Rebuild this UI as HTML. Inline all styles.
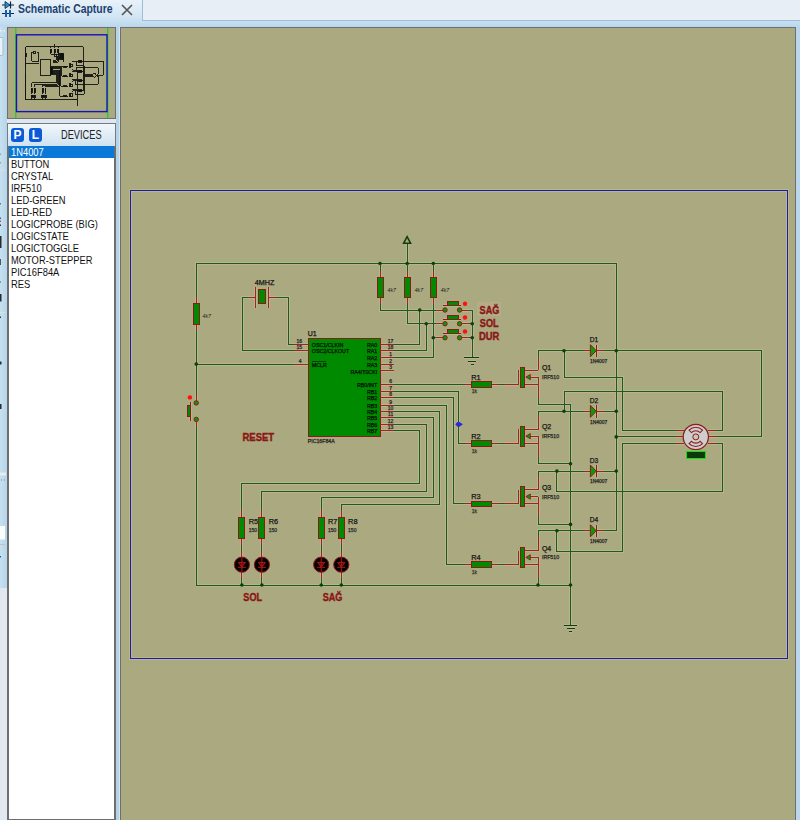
<!DOCTYPE html>
<html><head><meta charset="utf-8">
<style>
*{margin:0;padding:0;box-sizing:border-box}
html,body{width:800px;height:820px;overflow:hidden;background:#dbe7f3;font-family:"Liberation Sans",sans-serif}
#tabbar{position:absolute;left:0;top:0;width:800px;height:27px;background:linear-gradient(#e9f2f9,#d3e6f4 60%,#b9d7ed)}
#tabtitle{position:absolute;left:18px;top:2px;font-size:12px;font-weight:bold;color:#1d3f6e;transform:scaleX(0.87);transform-origin:0 0;white-space:nowrap}
#tabrest{position:absolute;left:142px;top:-1px;width:660px;height:22px;background:#e8eef5;border:1px solid #9dbdd8}
#leftstrip{position:absolute;left:0;top:27px;width:7px;height:793px;background:linear-gradient(90deg,#c6e0f1,#b6d5ea)}
#ovw{position:absolute;left:7px;top:27px;width:110px;height:92px;background:#aaa97f;border:1px solid #6f6f6f;overflow:hidden}
#devhdr{position:absolute;left:7px;top:123px;width:109px;height:23px;background:linear-gradient(#f2f7fb,#cfe2f1);border:1px solid #7a7a7a;border-bottom:none}
.pl{position:absolute;top:4px;width:13px;height:14px;background:#0b5bd9;border-radius:3px;color:#fff;font-size:12px;font-weight:bold;text-align:center;line-height:14px}
#devlbl{position:absolute;left:53px;top:4px;font-size:12px;color:#222;transform:scaleX(0.77);transform-origin:0 0}
#devlist{position:absolute;left:7px;top:146px;width:109px;height:674px;background:#fff;border:2px solid #6e6e6e;border-top:none;border-bottom:1px solid #6e6e6e}
#devlist div{height:12px;line-height:12px;font-size:11px;color:#111;padding-left:2px;white-space:nowrap}
#devlist div span{display:inline-block;transform:scaleX(0.85);transform-origin:0 0}
#devlist div.sel{background:#0a78d7;color:#fff}
#splitter{position:absolute;left:116px;top:27px;width:5px;height:793px;background:linear-gradient(90deg,#b4d4ea 0,#b4d4ea 60%,#dbe4ea 60%,#dbe4ea 80%,#707070 80%)}
#canvas{position:absolute;left:120px;top:27px;width:676px;height:800px;background:#aaa97f;border:1px solid #6f6f6f}
#rightstrip{position:absolute;left:796px;top:27px;width:4px;height:793px;background:#b9d6ec}
svg{position:absolute;left:0;top:0}
svg text{font-family:"Liberation Sans",sans-serif}
.sch line,.sch rect,.sch path.w{shape-rendering:crispEdges}
</style></head><body>
<div id="tabbar"></div>
<div id="tabrest"></div>
<svg width="16" height="22" style="left:0;top:0">
<line x1="2" y1="5" x2="14" y2="5" stroke="#222" stroke-width="1"/>
<polygon points="5,1.5 5,8.5 10,5" fill="#1e90e0" stroke="#123" stroke-width="0.8"/>
<line x1="10.5" y1="1.5" x2="10.5" y2="8.5" stroke="#123" stroke-width="1.2"/>
<line x1="2" y1="13.5" x2="14" y2="13.5" stroke="#222" stroke-width="1"/>
<rect x="5" y="10" width="2" height="7" fill="#1560b0"/>
<rect x="9" y="10" width="2" height="7" fill="#1560b0"/>
</svg>
<div id="tabtitle">Schematic Capture</div>
<svg width="12" height="12" style="left:121px;top:4px"><path d="M1,1 L11,11 M11,1 L1,11" stroke="#555" stroke-width="1.6"/></svg>
<div id="leftstrip"></div>
<div style="position:absolute;left:0;top:588px;width:7px;height:232px;background:#e1e8ef"></div>
<svg width="8" height="600" style="left:0;top:0">
<rect x="0" y="30" width="1.5" height="1.5" fill="#eef4f8"/><rect x="3.5" y="30" width="1.5" height="1.5" fill="#eef4f8"/>
<rect x="-1" y="37.5" width="4" height="18" rx="1" fill="#e8f1f8" stroke="#9fbfd6" stroke-width="1"/>
<rect x="0" y="153.5" width="1" height="1.5" fill="#a89e7a"/>
<rect x="0" y="162" width="1" height="1.5" fill="#a89e7a"/>
<rect x="0" y="169.5" width="5" height="1" fill="#e6e0d4"/>
<rect x="0" y="203" width="1" height="1.5" fill="#2a8a8a"/>
<rect x="0" y="217.5" width="1" height="1.5" fill="#2255cc"/>
<rect x="0" y="220.5" width="1" height="1.5" fill="#d05020"/>
<rect x="0" y="224.5" width="1" height="1.5" fill="#333"/>
<rect x="0" y="236" width="1.5" height="12" fill="#2a2a2a"/>
<rect x="0" y="259" width="1" height="6" fill="#555"/>
<rect x="0" y="281.5" width="1" height="1" fill="#555"/>
<rect x="0" y="294" width="1.5" height="7.5" fill="#2a2a2a"/>
<rect x="0" y="312" width="5" height="1" fill="#e6e0d4"/>
<rect x="0" y="316.5" width="1" height="1.5" fill="#333"/>
<rect x="0" y="361.5" width="1.5" height="3" fill="#2a2a2a"/>
<rect x="0" y="404" width="1.5" height="5" fill="#2a2a2a"/>
<rect x="0" y="472.5" width="6" height="3" fill="#e6eef4"/>
<rect x="1" y="479.5" width="1" height="1" fill="#888"/><rect x="4" y="479.5" width="1" height="1" fill="#888"/>
<rect x="-1" y="526" width="6" height="13.5" fill="#fdfdfd"/>
<rect x="0" y="544" width="5" height="1" fill="#c9c0b0"/>
<rect x="0" y="556" width="1" height="1.5" fill="#2255cc"/>
</svg>
<div id="devhdr"><div class="pl" style="left:3px">P</div><div class="pl" style="left:21px">L</div><div id="devlbl">DEVICES</div></div>
<div id="devlist">
<div class="sel"><span>1N4007</span></div><div><span>BUTTON</span></div><div><span>CRYSTAL</span></div><div><span>IRF510</span></div><div><span>LED-GREEN</span></div><div><span>LED-RED</span></div><div><span>LOGICPROBE (BIG)</span></div><div><span>LOGICSTATE</span></div><div><span>LOGICTOGGLE</span></div><div><span>MOTOR-STEPPER</span></div><div><span>PIC16F84A</span></div><div><span>RES</span></div>
</div>
<div id="splitter"></div>
<div id="canvas"></div>
<div id="rightstrip"></div>

<svg width="800" height="820" style="left:0;top:0">
<rect x="7.5" y="27.5" width="108" height="91" fill="#aaa97f" stroke="#6f6f6f" stroke-width="1"/>
<line x1="15.8" y1="28" x2="15.8" y2="118" stroke="#1ed01e" stroke-width="1.3"/>
<line x1="107.7" y1="28" x2="107.7" y2="118" stroke="#1ed01e" stroke-width="1.3"/>
<rect x="16.5" y="34.8" width="90.5" height="76.8" fill="none" stroke="#1414b8" stroke-width="1.4"/>
<g shape-rendering="crispEdges">
<path d="M25.56,52.34 L25.56,46.86 L83.44,46.86 L83.44,90.73 L81.75,90.73" fill="none" stroke="#111" stroke-width="0.9"/>
<path d="M25.56,57.87 L25.56,68.37" fill="none" stroke="#111" stroke-width="0.9"/>
<path d="M25.56,73.74 L25.56,99.62" fill="none" stroke="#111" stroke-width="0.9"/>
<path d="M25.56,99.62 L77.13,99.62" fill="none" stroke="#111" stroke-width="0.9"/>
<path d="M25.56,63.37 L39.04,63.37" fill="none" stroke="#111" stroke-width="0.9"/>
<path d="M39.04,61.19 L31.90,61.19 L31.90,52.44 L32.69,52.44" fill="none" stroke="#111" stroke-width="0.9"/>
<path d="M36.54,52.44 L38.22,52.44 L38.22,60.09 L39.04,60.09" fill="none" stroke="#111" stroke-width="0.9"/>
<path d="M50.88,52.44 L50.88,54.49 L58.54,54.49" fill="none" stroke="#111" stroke-width="0.9"/>
<path d="M54.63,52.44 L54.63,56.75 L58.54,56.75" fill="none" stroke="#111" stroke-width="0.9"/>
<path d="M58.23,52.44 L58.23,62.25 L52.81,62.25" fill="none" stroke="#111" stroke-width="0.9"/>
<path d="M58.23,59.05 L58.54,59.05" fill="none" stroke="#111" stroke-width="0.9"/>
<path d="M56.36,54.49 L56.36,60.09 L52.81,60.09" fill="none" stroke="#111" stroke-width="0.9"/>
<path d="M57.25,56.75 L57.25,61.15 L52.81,61.15" fill="none" stroke="#111" stroke-width="0.9"/>
<path d="M54.63,46.86 L54.63,43.58" fill="none" stroke="#111" stroke-width="0.9"/>
<path d="M63.11,54.49 L63.59,54.49 L63.59,62.22" fill="none" stroke="#111" stroke-width="0.9"/>
<path d="M63.11,56.75 L63.59,56.75" fill="none" stroke="#111" stroke-width="0.9"/>
<path d="M63.11,59.05 L63.59,59.05" fill="none" stroke="#111" stroke-width="0.9"/>
<path d="M52.81,66.70 L62.59,66.70" fill="none" stroke="#111" stroke-width="0.9"/>
<path d="M52.81,67.78 L61.70,67.78 L61.70,76.40 L62.59,76.40" fill="none" stroke="#111" stroke-width="0.9"/>
<path d="M52.81,68.85 L60.94,68.85 L60.94,86.31 L62.59,86.31" fill="none" stroke="#111" stroke-width="0.9"/>
<path d="M52.81,70.08 L59.99,70.08 L59.99,96.29 L62.59,96.29" fill="none" stroke="#111" stroke-width="0.9"/>
<path d="M52.81,71.15 L59.08,71.15 L59.08,86.36 L45.55,86.36 L45.55,87.35" fill="none" stroke="#111" stroke-width="0.9"/>
<path d="M52.81,72.17 L58.23,72.17 L58.23,85.28 L42.78,85.28 L42.78,87.35" fill="none" stroke="#111" stroke-width="0.9"/>
<path d="M52.81,73.27 L57.28,73.27 L57.28,84.24 L34.61,84.24 L34.61,87.35" fill="none" stroke="#111" stroke-width="0.9"/>
<path d="M52.81,74.28 L56.36,74.28 L56.36,82.98 L31.85,82.98 L31.85,87.35" fill="none" stroke="#111" stroke-width="0.9"/>
<path d="M31.85,93.01 L31.85,94.04" fill="none" stroke="#111" stroke-width="0.9"/>
<path d="M31.85,98.47 L31.85,99.62" fill="none" stroke="#111" stroke-width="0.9"/>
<path d="M34.61,93.01 L34.61,94.04" fill="none" stroke="#111" stroke-width="0.9"/>
<path d="M34.61,98.47 L34.61,99.62" fill="none" stroke="#111" stroke-width="0.9"/>
<path d="M42.78,93.01 L42.78,94.04" fill="none" stroke="#111" stroke-width="0.9"/>
<path d="M42.78,98.47 L42.78,99.62" fill="none" stroke="#111" stroke-width="0.9"/>
<path d="M45.55,93.01 L45.55,94.04" fill="none" stroke="#111" stroke-width="0.9"/>
<path d="M45.55,98.47 L45.55,99.62" fill="none" stroke="#111" stroke-width="0.9"/>
<path d="M67.21,66.70 L68.02,66.70" fill="none" stroke="#111" stroke-width="0.9"/>
<path d="M72.65,62.20 L72.65,61.17 L78.96,61.17" fill="none" stroke="#111" stroke-width="0.9"/>
<path d="M72.65,68.92 L72.65,70.04 L77.13,70.04" fill="none" stroke="#111" stroke-width="0.9"/>
<path d="M81.75,61.17 L83.44,61.17" fill="none" stroke="#111" stroke-width="0.9"/>
<path d="M67.21,76.40 L68.02,76.40" fill="none" stroke="#111" stroke-width="0.9"/>
<path d="M72.65,72.15 L72.65,71.12 L78.96,71.12" fill="none" stroke="#111" stroke-width="0.9"/>
<path d="M72.65,78.61 L72.65,79.72 L77.13,79.72" fill="none" stroke="#111" stroke-width="0.9"/>
<path d="M81.75,71.12 L83.44,71.12" fill="none" stroke="#111" stroke-width="0.9"/>
<path d="M67.21,86.31 L68.02,86.31" fill="none" stroke="#111" stroke-width="0.9"/>
<path d="M72.65,81.96 L72.65,80.93 L78.96,80.93" fill="none" stroke="#111" stroke-width="0.9"/>
<path d="M72.65,88.53 L72.65,89.68 L77.13,89.68" fill="none" stroke="#111" stroke-width="0.9"/>
<path d="M81.75,80.93 L83.44,80.93" fill="none" stroke="#111" stroke-width="0.9"/>
<path d="M67.21,96.29 L68.02,96.29" fill="none" stroke="#111" stroke-width="0.9"/>
<path d="M72.65,91.76 L72.65,90.73 L78.96,90.73" fill="none" stroke="#111" stroke-width="0.9"/>
<path d="M72.65,98.50 L72.65,99.62 L77.13,99.62" fill="none" stroke="#111" stroke-width="0.9"/>
<path d="M81.75,90.73 L83.44,90.73" fill="none" stroke="#111" stroke-width="0.9"/>
<path d="M77.13,70.04 L77.13,106.27" fill="none" stroke="#111" stroke-width="0.9"/>
<path d="M76.24,61.17 L76.24,65.53 L84.30,65.53 L84.30,74.27 L91.64,74.27" fill="none" stroke="#111" stroke-width="0.9"/>
<path d="M76.24,71.12 L76.24,67.83 L98.01,67.83 L98.01,74.27 L97.14,74.27" fill="none" stroke="#111" stroke-width="0.9"/>
<path d="M75.26,80.93 L75.26,84.24 L98.01,84.24 L98.01,76.37 L97.14,76.37" fill="none" stroke="#111" stroke-width="0.9"/>
<path d="M75.26,90.73 L75.26,94.04 L84.33,94.04 L84.33,76.37 L91.64,76.37" fill="none" stroke="#111" stroke-width="0.9"/>
<path d="M83.44,61.17 L103.45,61.17 L103.45,75.32 L97.14,75.32" fill="none" stroke="#111" stroke-width="0.9"/>
<path d="M83.44,75.32 L91.64,75.32" fill="none" stroke="#111" stroke-width="0.9"/>
<path d="M50.88,46.86 L50.88,48.01" fill="none" stroke="#111" stroke-width="0.9"/>
<path d="M54.63,46.86 L54.63,48.01" fill="none" stroke="#111" stroke-width="0.9"/>
<path d="M58.23,46.86 L58.23,48.01" fill="none" stroke="#111" stroke-width="0.9"/>
<path d="M25.56,46.86 L25.56,99.62" fill="none" stroke="#111" stroke-width="0.9"/>
<rect x="40.96" y="59.09" width="9.96" height="16.23" fill="none" stroke="#111" stroke-width="0.9"/>
<rect x="50.47" y="49.08" width="0.83" height="3.36" fill="#111" stroke="#111" stroke-width="0.9"/>
<rect x="54.22" y="49.08" width="0.83" height="3.36" fill="#111" stroke="#111" stroke-width="0.9"/>
<rect x="57.81" y="49.08" width="0.83" height="3.36" fill="#111" stroke="#111" stroke-width="0.9"/>
<rect x="25.11" y="53.34" width="0.90" height="3.45" fill="#111" stroke="#111" stroke-width="0.9"/>
<rect x="33.74" y="51.05" width="1.76" height="2.79" fill="none" stroke="#111" stroke-width="0.9"/>
<rect x="63.54" y="66.21" width="2.67" height="0.98" fill="#111" stroke="#111" stroke-width="0.9"/>
<rect x="69.90" y="63.91" width="0.96" height="3.28" fill="#111" stroke="#111" stroke-width="0.9"/>
<rect x="70.86" y="64.40" width="1.79" height="2.30" fill="none" stroke="#111" stroke-width="0.9"/>
<rect x="63.54" y="75.91" width="2.67" height="0.98" fill="#111" stroke="#111" stroke-width="0.9"/>
<rect x="69.90" y="73.61" width="0.96" height="3.28" fill="#111" stroke="#111" stroke-width="0.9"/>
<rect x="70.86" y="74.10" width="1.79" height="2.30" fill="none" stroke="#111" stroke-width="0.9"/>
<rect x="63.54" y="85.82" width="2.67" height="0.98" fill="#111" stroke="#111" stroke-width="0.9"/>
<rect x="69.90" y="83.52" width="0.96" height="3.28" fill="#111" stroke="#111" stroke-width="0.9"/>
<rect x="70.86" y="84.01" width="1.79" height="2.30" fill="none" stroke="#111" stroke-width="0.9"/>
<rect x="63.54" y="95.80" width="2.67" height="0.98" fill="#111" stroke="#111" stroke-width="0.9"/>
<rect x="69.90" y="93.50" width="0.96" height="3.28" fill="#111" stroke="#111" stroke-width="0.9"/>
<rect x="70.86" y="93.99" width="1.79" height="2.30" fill="none" stroke="#111" stroke-width="0.9"/>
<rect x="78.99" y="60.19" width="2.76" height="1.97" fill="#111" stroke="#111" stroke-width="0.9"/>
<rect x="78.99" y="70.13" width="2.76" height="1.97" fill="#111" stroke="#111" stroke-width="0.9"/>
<rect x="78.99" y="79.94" width="2.76" height="1.97" fill="#111" stroke="#111" stroke-width="0.9"/>
<rect x="78.99" y="89.74" width="2.76" height="1.97" fill="#111" stroke="#111" stroke-width="0.9"/>
<rect x="31.44" y="88.46" width="0.83" height="3.77" fill="#111" stroke="#111" stroke-width="0.9"/>
<rect x="31.02" y="95.02" width="1.65" height="2.46" fill="#111" stroke="#111" stroke-width="0.9"/>
<rect x="34.19" y="88.46" width="0.83" height="3.77" fill="#111" stroke="#111" stroke-width="0.9"/>
<rect x="33.78" y="95.02" width="1.65" height="2.46" fill="#111" stroke="#111" stroke-width="0.9"/>
<rect x="42.37" y="88.46" width="0.83" height="3.77" fill="#111" stroke="#111" stroke-width="0.9"/>
<rect x="41.95" y="95.02" width="1.65" height="2.46" fill="#111" stroke="#111" stroke-width="0.9"/>
<rect x="45.13" y="88.46" width="0.83" height="3.77" fill="#111" stroke="#111" stroke-width="0.9"/>
<rect x="44.72" y="95.02" width="1.65" height="2.46" fill="#111" stroke="#111" stroke-width="0.9"/>
<rect x="59.56" y="53.18" width="3.45" height="1.64" fill="#111" stroke="#111" stroke-width="0.9"/>
<rect x="59.56" y="55.44" width="3.45" height="1.64" fill="#111" stroke="#111" stroke-width="0.9"/>
<rect x="59.56" y="57.73" width="3.45" height="1.64" fill="#111" stroke="#111" stroke-width="0.9"/>
<circle cx="94.40" cy="75.32" r="1.8" fill="none" stroke="#111" stroke-width="0.9"/>
<rect x="50.88" y="66.64" width="1.93" height="7.71" fill="#111" stroke="#111" stroke-width="0.9"/>
</g>
<rect x="130.5" y="190" width="657" height="468" fill="none" stroke="#bab68a" stroke-width="3" shape-rendering="crispEdges"/>
<rect x="130.5" y="190" width="657" height="468" fill="none" stroke="#1a1ab8" stroke-width="1" shape-rendering="crispEdges"/>
<g class="sch">
<path class="w" d="M196.25,296.9 L196.25,263.5 L616.25,263.5 L616.25,530.8 L604,530.8" fill="none" stroke="#b8b48c" stroke-width="3"/>
<path class="w" d="M196.25,330.6 L196.25,394.6" fill="none" stroke="#b8b48c" stroke-width="3"/>
<path class="w" d="M196.25,427.3 L196.25,585" fill="none" stroke="#b8b48c" stroke-width="3"/>
<path class="w" d="M196.25,585 L570.5,585" fill="none" stroke="#b8b48c" stroke-width="3"/>
<path class="w" d="M196.25,364.1 L294.1,364.1" fill="none" stroke="#b8b48c" stroke-width="3"/>
<path class="w" d="M294.1,350.8 L242.25,350.8 L242.25,297.5 L248,297.5" fill="none" stroke="#b8b48c" stroke-width="3"/>
<path class="w" d="M275.9,297.5 L288.1,297.5 L288.1,344.1 L294.1,344.1" fill="none" stroke="#b8b48c" stroke-width="3"/>
<path class="w" d="M380,297.5 L380,310 L435.6,310" fill="none" stroke="#b8b48c" stroke-width="3"/>
<path class="w" d="M407.2,297.5 L407.2,323.75 L435.6,323.75" fill="none" stroke="#b8b48c" stroke-width="3"/>
<path class="w" d="M433.3,297.5 L433.3,357.25 L394,357.25" fill="none" stroke="#b8b48c" stroke-width="3"/>
<path class="w" d="M433.3,337.75 L435.6,337.75" fill="none" stroke="#b8b48c" stroke-width="3"/>
<path class="w" d="M419.75,310 L419.75,344.1 L394,344.1" fill="none" stroke="#b8b48c" stroke-width="3"/>
<path class="w" d="M426.25,323.75 L426.25,350.6 L394,350.6" fill="none" stroke="#b8b48c" stroke-width="3"/>
<path class="w" d="M407.2,263.5 L407.2,243.5" fill="none" stroke="#b8b48c" stroke-width="3"/>
<path class="w" d="M468.75,310 L472.25,310 L472.25,357.1" fill="none" stroke="#b8b48c" stroke-width="3"/>
<path class="w" d="M468.75,323.75 L472.25,323.75" fill="none" stroke="#b8b48c" stroke-width="3"/>
<path class="w" d="M468.75,337.75 L472.25,337.75" fill="none" stroke="#b8b48c" stroke-width="3"/>
<path class="w" d="M394,384.4 L465,384.4" fill="none" stroke="#b8b48c" stroke-width="3"/>
<path class="w" d="M394,391.0 L458.5,391.0 L458.5,443.5 L465,443.5" fill="none" stroke="#b8b48c" stroke-width="3"/>
<path class="w" d="M394,397.5 L453.0,397.5 L453.0,503.9 L465,503.9" fill="none" stroke="#b8b48c" stroke-width="3"/>
<path class="w" d="M394,405.0 L446.1,405.0 L446.1,564.7 L465,564.7" fill="none" stroke="#b8b48c" stroke-width="3"/>
<path class="w" d="M394,411.5 L439.5,411.5 L439.5,504.2 L341.3,504.2 L341.3,510.25" fill="none" stroke="#b8b48c" stroke-width="3"/>
<path class="w" d="M394,417.75 L433.3,417.75 L433.3,497.6 L321.2,497.6 L321.2,510.25" fill="none" stroke="#b8b48c" stroke-width="3"/>
<path class="w" d="M394,424.4 L426.4,424.4 L426.4,491.3 L261.9,491.3 L261.9,510.25" fill="none" stroke="#b8b48c" stroke-width="3"/>
<path class="w" d="M394,430.6 L419.75,430.6 L419.75,483.6 L241.9,483.6 L241.9,510.25" fill="none" stroke="#b8b48c" stroke-width="3"/>
<path class="w" d="M241.9,544.75 L241.9,551" fill="none" stroke="#b8b48c" stroke-width="3"/>
<path class="w" d="M241.9,578 L241.9,585" fill="none" stroke="#b8b48c" stroke-width="3"/>
<path class="w" d="M261.9,544.75 L261.9,551" fill="none" stroke="#b8b48c" stroke-width="3"/>
<path class="w" d="M261.9,578 L261.9,585" fill="none" stroke="#b8b48c" stroke-width="3"/>
<path class="w" d="M321.2,544.75 L321.2,551" fill="none" stroke="#b8b48c" stroke-width="3"/>
<path class="w" d="M321.2,578 L321.2,585" fill="none" stroke="#b8b48c" stroke-width="3"/>
<path class="w" d="M341.3,544.75 L341.3,551" fill="none" stroke="#b8b48c" stroke-width="3"/>
<path class="w" d="M341.3,578 L341.3,585" fill="none" stroke="#b8b48c" stroke-width="3"/>
<path class="w" d="M498.5,384.4 L504.4,384.4" fill="none" stroke="#b8b48c" stroke-width="3"/>
<path class="w" d="M538,357.0 L538,350.7 L583.75,350.7" fill="none" stroke="#b8b48c" stroke-width="3"/>
<path class="w" d="M538,397.9 L538,404.75 L570.5,404.75" fill="none" stroke="#b8b48c" stroke-width="3"/>
<path class="w" d="M604,350.7 L616.25,350.7" fill="none" stroke="#b8b48c" stroke-width="3"/>
<path class="w" d="M498.5,443.5 L504.4,443.5" fill="none" stroke="#b8b48c" stroke-width="3"/>
<path class="w" d="M538,417.6 L538,411.3 L583.75,411.3" fill="none" stroke="#b8b48c" stroke-width="3"/>
<path class="w" d="M538,457.0 L538,463.75 L570.5,463.75" fill="none" stroke="#b8b48c" stroke-width="3"/>
<path class="w" d="M604,411.3 L616.25,411.3" fill="none" stroke="#b8b48c" stroke-width="3"/>
<path class="w" d="M498.5,503.9 L504.4,503.9" fill="none" stroke="#b8b48c" stroke-width="3"/>
<path class="w" d="M538,477.40000000000003 L538,471.1 L583.75,471.1" fill="none" stroke="#b8b48c" stroke-width="3"/>
<path class="w" d="M538,517.4 L538,524.4 L570.5,524.4" fill="none" stroke="#b8b48c" stroke-width="3"/>
<path class="w" d="M604,471.1 L616.25,471.1" fill="none" stroke="#b8b48c" stroke-width="3"/>
<path class="w" d="M498.5,564.7 L504.4,564.7" fill="none" stroke="#b8b48c" stroke-width="3"/>
<path class="w" d="M538,537.0999999999999 L538,530.8 L583.75,530.8" fill="none" stroke="#b8b48c" stroke-width="3"/>
<path class="w" d="M538,578.2 L538,585 L570.5,585" fill="none" stroke="#b8b48c" stroke-width="3"/>
<path class="w" d="M604,530.8 L616.25,530.8" fill="none" stroke="#b8b48c" stroke-width="3"/>
<path class="w" d="M570.5,404.75 L570.5,625.5" fill="none" stroke="#b8b48c" stroke-width="3"/>
<path class="w" d="M564,350.7 L564,377.25 L622.5,377.25 L622.5,430.5 L675.8,430.5" fill="none" stroke="#b8b48c" stroke-width="3"/>
<path class="w" d="M564,411.3 L564,391.25 L722,391.25 L722,430.5 L715.7,430.5" fill="none" stroke="#b8b48c" stroke-width="3"/>
<path class="w" d="M556.9,471.1 L556.9,491.25 L722,491.25 L722,443.3 L715.7,443.3" fill="none" stroke="#b8b48c" stroke-width="3"/>
<path class="w" d="M556.9,530.8 L556.9,551 L622.75,551 L622.75,443.3 L675.8,443.3" fill="none" stroke="#b8b48c" stroke-width="3"/>
<path class="w" d="M616.25,350.7 L761.5,350.7 L761.5,436.9 L715.7,436.9" fill="none" stroke="#b8b48c" stroke-width="3"/>
<path class="w" d="M616.25,436.9 L675.8,436.9" fill="none" stroke="#b8b48c" stroke-width="3"/>
<line x1="196.25" y1="296.9" x2="196.25" y2="303" stroke="#b8b48c" stroke-width="3"/>
<line x1="196.25" y1="324" x2="196.25" y2="330.6" stroke="#b8b48c" stroke-width="3"/>
<path class="w" d="M380,263.5 L380,270.5" fill="none" stroke="#b8b48c" stroke-width="3"/>
<line x1="380" y1="270.5" x2="380" y2="277" stroke="#b8b48c" stroke-width="3"/>
<line x1="380" y1="297.5" x2="380" y2="304.4" stroke="#b8b48c" stroke-width="3"/>
<path class="w" d="M407.2,263.5 L407.2,270.5" fill="none" stroke="#b8b48c" stroke-width="3"/>
<line x1="407.2" y1="270.5" x2="407.2" y2="277" stroke="#b8b48c" stroke-width="3"/>
<line x1="407.2" y1="297.5" x2="407.2" y2="304.4" stroke="#b8b48c" stroke-width="3"/>
<path class="w" d="M433.3,263.5 L433.3,270.5" fill="none" stroke="#b8b48c" stroke-width="3"/>
<line x1="433.3" y1="270.5" x2="433.3" y2="277" stroke="#b8b48c" stroke-width="3"/>
<line x1="433.3" y1="297.5" x2="433.3" y2="304.4" stroke="#b8b48c" stroke-width="3"/>
<line x1="196.25" y1="394.6" x2="196.25" y2="400.7" stroke="#b8b48c" stroke-width="3"/>
<line x1="196.25" y1="421.6" x2="196.25" y2="427.3" stroke="#b8b48c" stroke-width="3"/>
<line x1="190.6" y1="401.9" x2="190.6" y2="420.9" stroke="#b8b48c" stroke-width="3"/>
<line x1="248" y1="297.5" x2="255.6" y2="297.5" stroke="#b8b48c" stroke-width="3"/>
<line x1="268.4" y1="297.5" x2="275.9" y2="297.5" stroke="#b8b48c" stroke-width="3"/>
<line x1="255.6" y1="286.9" x2="255.6" y2="307.5" stroke="#b8b48c" stroke-width="3"/>
<line x1="268.4" y1="286.9" x2="268.4" y2="307.5" stroke="#b8b48c" stroke-width="3"/>
<line x1="294.1" y1="344.1" x2="308" y2="344.1" stroke="#b8b48c" stroke-width="3"/>
<line x1="294.1" y1="350.8" x2="308" y2="350.8" stroke="#b8b48c" stroke-width="3"/>
<line x1="294.1" y1="364.1" x2="308" y2="364.1" stroke="#b8b48c" stroke-width="3"/>
<line x1="380.3" y1="344.1" x2="394" y2="344.1" stroke="#b8b48c" stroke-width="3"/>
<line x1="380.3" y1="350.6" x2="394" y2="350.6" stroke="#b8b48c" stroke-width="3"/>
<line x1="380.3" y1="357.25" x2="394" y2="357.25" stroke="#b8b48c" stroke-width="3"/>
<line x1="380.3" y1="364.4" x2="394" y2="364.4" stroke="#b8b48c" stroke-width="3"/>
<line x1="380.3" y1="370.9" x2="394" y2="370.9" stroke="#b8b48c" stroke-width="3"/>
<line x1="380.3" y1="384.4" x2="394" y2="384.4" stroke="#b8b48c" stroke-width="3"/>
<line x1="380.3" y1="391.0" x2="394" y2="391.0" stroke="#b8b48c" stroke-width="3"/>
<line x1="380.3" y1="397.5" x2="394" y2="397.5" stroke="#b8b48c" stroke-width="3"/>
<line x1="380.3" y1="405.0" x2="394" y2="405.0" stroke="#b8b48c" stroke-width="3"/>
<line x1="380.3" y1="411.5" x2="394" y2="411.5" stroke="#b8b48c" stroke-width="3"/>
<line x1="380.3" y1="417.75" x2="394" y2="417.75" stroke="#b8b48c" stroke-width="3"/>
<line x1="380.3" y1="424.4" x2="394" y2="424.4" stroke="#b8b48c" stroke-width="3"/>
<line x1="380.3" y1="430.6" x2="394" y2="430.6" stroke="#b8b48c" stroke-width="3"/>
<line x1="311.8" y1="361.3" x2="326.4" y2="361.3" stroke="#b8b48c" stroke-width="3"/>
<line x1="435.6" y1="310" x2="442.8" y2="310" stroke="#b8b48c" stroke-width="3"/>
<line x1="461.8" y1="310" x2="468.75" y2="310" stroke="#b8b48c" stroke-width="3"/>
<line x1="443" y1="305.4" x2="461.25" y2="305.4" stroke="#b8b48c" stroke-width="3"/>
<line x1="435.6" y1="323.75" x2="442.8" y2="323.75" stroke="#b8b48c" stroke-width="3"/>
<line x1="461.8" y1="323.75" x2="468.75" y2="323.75" stroke="#b8b48c" stroke-width="3"/>
<line x1="443" y1="319.15" x2="461.25" y2="319.15" stroke="#b8b48c" stroke-width="3"/>
<line x1="435.6" y1="337.75" x2="442.8" y2="337.75" stroke="#b8b48c" stroke-width="3"/>
<line x1="461.8" y1="337.75" x2="468.75" y2="337.75" stroke="#b8b48c" stroke-width="3"/>
<line x1="443" y1="333.15" x2="461.25" y2="333.15" stroke="#b8b48c" stroke-width="3"/>
<line x1="464.4" y1="357.5" x2="479" y2="357.5" stroke="#b8b48c" stroke-width="3"/>
<line x1="467.75" y1="361.5" x2="475.6" y2="361.5" stroke="#b8b48c" stroke-width="3"/>
<line x1="471" y1="364.5" x2="473.5" y2="364.5" stroke="#b8b48c" stroke-width="3"/>
<line x1="564" y1="625.5" x2="577" y2="625.5" stroke="#b8b48c" stroke-width="3"/>
<line x1="566.5" y1="628.5" x2="574.5" y2="628.5" stroke="#b8b48c" stroke-width="3"/>
<line x1="569" y1="631.5" x2="572" y2="631.5" stroke="#b8b48c" stroke-width="3"/>
<line x1="465" y1="384.4" x2="471.9" y2="384.4" stroke="#b8b48c" stroke-width="3"/>
<line x1="491.25" y1="384.4" x2="498.5" y2="384.4" stroke="#b8b48c" stroke-width="3"/>
<line x1="465" y1="443.5" x2="471.9" y2="443.5" stroke="#b8b48c" stroke-width="3"/>
<line x1="491.25" y1="443.5" x2="498.5" y2="443.5" stroke="#b8b48c" stroke-width="3"/>
<line x1="465" y1="503.9" x2="471.9" y2="503.9" stroke="#b8b48c" stroke-width="3"/>
<line x1="491.25" y1="503.9" x2="498.5" y2="503.9" stroke="#b8b48c" stroke-width="3"/>
<line x1="465" y1="564.7" x2="471.9" y2="564.7" stroke="#b8b48c" stroke-width="3"/>
<line x1="491.25" y1="564.7" x2="498.5" y2="564.7" stroke="#b8b48c" stroke-width="3"/>
<line x1="504.4" y1="384.4" x2="518.1" y2="384.4" stroke="#b8b48c" stroke-width="3"/>
<line x1="518.1" y1="370.2" x2="518.1" y2="384.9" stroke="#b8b48c" stroke-width="3"/>
<line x1="525" y1="370.4" x2="538" y2="370.4" stroke="#b8b48c" stroke-width="3"/>
<line x1="538" y1="356.7" x2="538" y2="370.4" stroke="#b8b48c" stroke-width="3"/>
<line x1="525" y1="384.4" x2="538" y2="384.4" stroke="#b8b48c" stroke-width="3"/>
<line x1="530" y1="377.09999999999997" x2="538" y2="377.09999999999997" stroke="#b8b48c" stroke-width="3"/>
<line x1="538" y1="377.09999999999997" x2="538" y2="397.9" stroke="#b8b48c" stroke-width="3"/>
<line x1="504.4" y1="443.5" x2="518.1" y2="443.5" stroke="#b8b48c" stroke-width="3"/>
<line x1="518.1" y1="429.3" x2="518.1" y2="444.0" stroke="#b8b48c" stroke-width="3"/>
<line x1="525" y1="429.5" x2="538" y2="429.5" stroke="#b8b48c" stroke-width="3"/>
<line x1="538" y1="415.8" x2="538" y2="429.5" stroke="#b8b48c" stroke-width="3"/>
<line x1="525" y1="443.5" x2="538" y2="443.5" stroke="#b8b48c" stroke-width="3"/>
<line x1="530" y1="436.2" x2="538" y2="436.2" stroke="#b8b48c" stroke-width="3"/>
<line x1="538" y1="436.2" x2="538" y2="457.0" stroke="#b8b48c" stroke-width="3"/>
<line x1="504.4" y1="503.9" x2="518.1" y2="503.9" stroke="#b8b48c" stroke-width="3"/>
<line x1="518.1" y1="489.7" x2="518.1" y2="504.4" stroke="#b8b48c" stroke-width="3"/>
<line x1="525" y1="489.9" x2="538" y2="489.9" stroke="#b8b48c" stroke-width="3"/>
<line x1="538" y1="476.2" x2="538" y2="489.9" stroke="#b8b48c" stroke-width="3"/>
<line x1="525" y1="503.9" x2="538" y2="503.9" stroke="#b8b48c" stroke-width="3"/>
<line x1="530" y1="496.59999999999997" x2="538" y2="496.59999999999997" stroke="#b8b48c" stroke-width="3"/>
<line x1="538" y1="496.59999999999997" x2="538" y2="517.4" stroke="#b8b48c" stroke-width="3"/>
<line x1="504.4" y1="564.7" x2="518.1" y2="564.7" stroke="#b8b48c" stroke-width="3"/>
<line x1="518.1" y1="550.5" x2="518.1" y2="565.2" stroke="#b8b48c" stroke-width="3"/>
<line x1="525" y1="550.7" x2="538" y2="550.7" stroke="#b8b48c" stroke-width="3"/>
<line x1="538" y1="537.0" x2="538" y2="550.7" stroke="#b8b48c" stroke-width="3"/>
<line x1="525" y1="564.7" x2="538" y2="564.7" stroke="#b8b48c" stroke-width="3"/>
<line x1="530" y1="557.4000000000001" x2="538" y2="557.4000000000001" stroke="#b8b48c" stroke-width="3"/>
<line x1="538" y1="557.4000000000001" x2="538" y2="578.2" stroke="#b8b48c" stroke-width="3"/>
<line x1="583.75" y1="350.7" x2="590.4" y2="350.7" stroke="#b8b48c" stroke-width="3"/>
<line x1="596.25" y1="350.7" x2="604" y2="350.7" stroke="#b8b48c" stroke-width="3"/>
<line x1="596.25" y1="344.5" x2="596.25" y2="356.9" stroke="#b8b48c" stroke-width="3"/>
<line x1="583.75" y1="411.3" x2="590.4" y2="411.3" stroke="#b8b48c" stroke-width="3"/>
<line x1="596.25" y1="411.3" x2="604" y2="411.3" stroke="#b8b48c" stroke-width="3"/>
<line x1="596.25" y1="405.1" x2="596.25" y2="417.5" stroke="#b8b48c" stroke-width="3"/>
<line x1="583.75" y1="471.1" x2="590.4" y2="471.1" stroke="#b8b48c" stroke-width="3"/>
<line x1="596.25" y1="471.1" x2="604" y2="471.1" stroke="#b8b48c" stroke-width="3"/>
<line x1="596.25" y1="464.90000000000003" x2="596.25" y2="477.3" stroke="#b8b48c" stroke-width="3"/>
<line x1="583.75" y1="530.8" x2="590.4" y2="530.8" stroke="#b8b48c" stroke-width="3"/>
<line x1="596.25" y1="530.8" x2="604" y2="530.8" stroke="#b8b48c" stroke-width="3"/>
<line x1="596.25" y1="524.5999999999999" x2="596.25" y2="537.0" stroke="#b8b48c" stroke-width="3"/>
<line x1="675.8" y1="430.5" x2="684" y2="430.5" stroke="#b8b48c" stroke-width="3"/>
<line x1="707.5" y1="430.5" x2="715.7" y2="430.5" stroke="#b8b48c" stroke-width="3"/>
<line x1="675.8" y1="436.9" x2="684" y2="436.9" stroke="#b8b48c" stroke-width="3"/>
<line x1="707.5" y1="436.9" x2="715.7" y2="436.9" stroke="#b8b48c" stroke-width="3"/>
<line x1="675.8" y1="443.3" x2="684" y2="443.3" stroke="#b8b48c" stroke-width="3"/>
<line x1="707.5" y1="443.3" x2="715.7" y2="443.3" stroke="#b8b48c" stroke-width="3"/>
<line x1="241.9" y1="510.25" x2="241.9" y2="517.75" stroke="#b8b48c" stroke-width="3"/>
<line x1="241.9" y1="538.5" x2="241.9" y2="544.75" stroke="#b8b48c" stroke-width="3"/>
<line x1="241.9" y1="551" x2="241.9" y2="557" stroke="#b8b48c" stroke-width="3"/>
<line x1="241.9" y1="572.3" x2="241.9" y2="578" stroke="#b8b48c" stroke-width="3"/>
<line x1="261.9" y1="510.25" x2="261.9" y2="517.75" stroke="#b8b48c" stroke-width="3"/>
<line x1="261.9" y1="538.5" x2="261.9" y2="544.75" stroke="#b8b48c" stroke-width="3"/>
<line x1="261.9" y1="551" x2="261.9" y2="557" stroke="#b8b48c" stroke-width="3"/>
<line x1="261.9" y1="572.3" x2="261.9" y2="578" stroke="#b8b48c" stroke-width="3"/>
<line x1="321.2" y1="510.25" x2="321.2" y2="517.75" stroke="#b8b48c" stroke-width="3"/>
<line x1="321.2" y1="538.5" x2="321.2" y2="544.75" stroke="#b8b48c" stroke-width="3"/>
<line x1="321.2" y1="551" x2="321.2" y2="557" stroke="#b8b48c" stroke-width="3"/>
<line x1="321.2" y1="572.3" x2="321.2" y2="578" stroke="#b8b48c" stroke-width="3"/>
<line x1="341.3" y1="510.25" x2="341.3" y2="517.75" stroke="#b8b48c" stroke-width="3"/>
<line x1="341.3" y1="538.5" x2="341.3" y2="544.75" stroke="#b8b48c" stroke-width="3"/>
<line x1="341.3" y1="551" x2="341.3" y2="557" stroke="#b8b48c" stroke-width="3"/>
<line x1="341.3" y1="572.3" x2="341.3" y2="578" stroke="#b8b48c" stroke-width="3"/>
<path class="w" d="M196.25,296.9 L196.25,263.5 L616.25,263.5 L616.25,530.8 L604,530.8" fill="none" stroke="#1e5a1d" stroke-width="1"/>
<path class="w" d="M196.25,330.6 L196.25,394.6" fill="none" stroke="#1e5a1d" stroke-width="1"/>
<path class="w" d="M196.25,427.3 L196.25,585" fill="none" stroke="#1e5a1d" stroke-width="1"/>
<path class="w" d="M196.25,585 L570.5,585" fill="none" stroke="#1e5a1d" stroke-width="1"/>
<path class="w" d="M196.25,364.1 L294.1,364.1" fill="none" stroke="#1e5a1d" stroke-width="1"/>
<path class="w" d="M294.1,350.8 L242.25,350.8 L242.25,297.5 L248,297.5" fill="none" stroke="#1e5a1d" stroke-width="1"/>
<path class="w" d="M275.9,297.5 L288.1,297.5 L288.1,344.1 L294.1,344.1" fill="none" stroke="#1e5a1d" stroke-width="1"/>
<path class="w" d="M380,297.5 L380,310 L435.6,310" fill="none" stroke="#1e5a1d" stroke-width="1"/>
<path class="w" d="M407.2,297.5 L407.2,323.75 L435.6,323.75" fill="none" stroke="#1e5a1d" stroke-width="1"/>
<path class="w" d="M433.3,297.5 L433.3,357.25 L394,357.25" fill="none" stroke="#1e5a1d" stroke-width="1"/>
<path class="w" d="M433.3,337.75 L435.6,337.75" fill="none" stroke="#1e5a1d" stroke-width="1"/>
<path class="w" d="M419.75,310 L419.75,344.1 L394,344.1" fill="none" stroke="#1e5a1d" stroke-width="1"/>
<path class="w" d="M426.25,323.75 L426.25,350.6 L394,350.6" fill="none" stroke="#1e5a1d" stroke-width="1"/>
<path class="w" d="M407.2,263.5 L407.2,243.5" fill="none" stroke="#1e5a1d" stroke-width="1"/>
<path class="w" d="M468.75,310 L472.25,310 L472.25,357.1" fill="none" stroke="#1e5a1d" stroke-width="1"/>
<path class="w" d="M468.75,323.75 L472.25,323.75" fill="none" stroke="#1e5a1d" stroke-width="1"/>
<path class="w" d="M468.75,337.75 L472.25,337.75" fill="none" stroke="#1e5a1d" stroke-width="1"/>
<path class="w" d="M394,384.4 L465,384.4" fill="none" stroke="#1e5a1d" stroke-width="1"/>
<path class="w" d="M394,391.0 L458.5,391.0 L458.5,443.5 L465,443.5" fill="none" stroke="#1e5a1d" stroke-width="1"/>
<path class="w" d="M394,397.5 L453.0,397.5 L453.0,503.9 L465,503.9" fill="none" stroke="#1e5a1d" stroke-width="1"/>
<path class="w" d="M394,405.0 L446.1,405.0 L446.1,564.7 L465,564.7" fill="none" stroke="#1e5a1d" stroke-width="1"/>
<path class="w" d="M394,411.5 L439.5,411.5 L439.5,504.2 L341.3,504.2 L341.3,510.25" fill="none" stroke="#1e5a1d" stroke-width="1"/>
<path class="w" d="M394,417.75 L433.3,417.75 L433.3,497.6 L321.2,497.6 L321.2,510.25" fill="none" stroke="#1e5a1d" stroke-width="1"/>
<path class="w" d="M394,424.4 L426.4,424.4 L426.4,491.3 L261.9,491.3 L261.9,510.25" fill="none" stroke="#1e5a1d" stroke-width="1"/>
<path class="w" d="M394,430.6 L419.75,430.6 L419.75,483.6 L241.9,483.6 L241.9,510.25" fill="none" stroke="#1e5a1d" stroke-width="1"/>
<path class="w" d="M241.9,544.75 L241.9,551" fill="none" stroke="#1e5a1d" stroke-width="1"/>
<path class="w" d="M241.9,578 L241.9,585" fill="none" stroke="#1e5a1d" stroke-width="1"/>
<path class="w" d="M261.9,544.75 L261.9,551" fill="none" stroke="#1e5a1d" stroke-width="1"/>
<path class="w" d="M261.9,578 L261.9,585" fill="none" stroke="#1e5a1d" stroke-width="1"/>
<path class="w" d="M321.2,544.75 L321.2,551" fill="none" stroke="#1e5a1d" stroke-width="1"/>
<path class="w" d="M321.2,578 L321.2,585" fill="none" stroke="#1e5a1d" stroke-width="1"/>
<path class="w" d="M341.3,544.75 L341.3,551" fill="none" stroke="#1e5a1d" stroke-width="1"/>
<path class="w" d="M341.3,578 L341.3,585" fill="none" stroke="#1e5a1d" stroke-width="1"/>
<path class="w" d="M498.5,384.4 L504.4,384.4" fill="none" stroke="#1e5a1d" stroke-width="1"/>
<path class="w" d="M538,357.0 L538,350.7 L583.75,350.7" fill="none" stroke="#1e5a1d" stroke-width="1"/>
<path class="w" d="M538,397.9 L538,404.75 L570.5,404.75" fill="none" stroke="#1e5a1d" stroke-width="1"/>
<path class="w" d="M604,350.7 L616.25,350.7" fill="none" stroke="#1e5a1d" stroke-width="1"/>
<path class="w" d="M498.5,443.5 L504.4,443.5" fill="none" stroke="#1e5a1d" stroke-width="1"/>
<path class="w" d="M538,417.6 L538,411.3 L583.75,411.3" fill="none" stroke="#1e5a1d" stroke-width="1"/>
<path class="w" d="M538,457.0 L538,463.75 L570.5,463.75" fill="none" stroke="#1e5a1d" stroke-width="1"/>
<path class="w" d="M604,411.3 L616.25,411.3" fill="none" stroke="#1e5a1d" stroke-width="1"/>
<path class="w" d="M498.5,503.9 L504.4,503.9" fill="none" stroke="#1e5a1d" stroke-width="1"/>
<path class="w" d="M538,477.40000000000003 L538,471.1 L583.75,471.1" fill="none" stroke="#1e5a1d" stroke-width="1"/>
<path class="w" d="M538,517.4 L538,524.4 L570.5,524.4" fill="none" stroke="#1e5a1d" stroke-width="1"/>
<path class="w" d="M604,471.1 L616.25,471.1" fill="none" stroke="#1e5a1d" stroke-width="1"/>
<path class="w" d="M498.5,564.7 L504.4,564.7" fill="none" stroke="#1e5a1d" stroke-width="1"/>
<path class="w" d="M538,537.0999999999999 L538,530.8 L583.75,530.8" fill="none" stroke="#1e5a1d" stroke-width="1"/>
<path class="w" d="M538,578.2 L538,585 L570.5,585" fill="none" stroke="#1e5a1d" stroke-width="1"/>
<path class="w" d="M604,530.8 L616.25,530.8" fill="none" stroke="#1e5a1d" stroke-width="1"/>
<path class="w" d="M570.5,404.75 L570.5,625.5" fill="none" stroke="#1e5a1d" stroke-width="1"/>
<path class="w" d="M564,350.7 L564,377.25 L622.5,377.25 L622.5,430.5 L675.8,430.5" fill="none" stroke="#1e5a1d" stroke-width="1"/>
<path class="w" d="M564,411.3 L564,391.25 L722,391.25 L722,430.5 L715.7,430.5" fill="none" stroke="#1e5a1d" stroke-width="1"/>
<path class="w" d="M556.9,471.1 L556.9,491.25 L722,491.25 L722,443.3 L715.7,443.3" fill="none" stroke="#1e5a1d" stroke-width="1"/>
<path class="w" d="M556.9,530.8 L556.9,551 L622.75,551 L622.75,443.3 L675.8,443.3" fill="none" stroke="#1e5a1d" stroke-width="1"/>
<path class="w" d="M616.25,350.7 L761.5,350.7 L761.5,436.9 L715.7,436.9" fill="none" stroke="#1e5a1d" stroke-width="1"/>
<path class="w" d="M616.25,436.9 L675.8,436.9" fill="none" stroke="#1e5a1d" stroke-width="1"/>
<circle cx="196.25" cy="364.1" r="1.8" fill="#103c10"/>
<circle cx="380" cy="263.5" r="1.8" fill="#103c10"/>
<circle cx="407.2" cy="263.5" r="1.8" fill="#103c10"/>
<circle cx="433.3" cy="263.5" r="1.8" fill="#103c10"/>
<circle cx="419.75" cy="310" r="1.8" fill="#103c10"/>
<circle cx="426.25" cy="323.75" r="1.8" fill="#103c10"/>
<circle cx="433.3" cy="337.75" r="1.8" fill="#103c10"/>
<circle cx="472.25" cy="323.75" r="1.8" fill="#103c10"/>
<circle cx="472.25" cy="337.75" r="1.8" fill="#103c10"/>
<circle cx="564" cy="350.7" r="1.8" fill="#103c10"/>
<circle cx="564" cy="411.3" r="1.8" fill="#103c10"/>
<circle cx="556.9" cy="471.1" r="1.8" fill="#103c10"/>
<circle cx="556.9" cy="530.8" r="1.8" fill="#103c10"/>
<circle cx="616.25" cy="350.7" r="1.8" fill="#103c10"/>
<circle cx="616.25" cy="411.3" r="1.8" fill="#103c10"/>
<circle cx="616.25" cy="471.1" r="1.8" fill="#103c10"/>
<circle cx="616.25" cy="436.9" r="1.8" fill="#103c10"/>
<circle cx="570.5" cy="463.75" r="1.8" fill="#103c10"/>
<circle cx="570.5" cy="524.4" r="1.8" fill="#103c10"/>
<circle cx="570.5" cy="585" r="1.8" fill="#103c10"/>
<circle cx="538" cy="585" r="1.8" fill="#103c10"/>
<circle cx="241.9" cy="585" r="1.8" fill="#103c10"/>
<circle cx="261.9" cy="585" r="1.8" fill="#103c10"/>
<circle cx="321.2" cy="585" r="1.8" fill="#103c10"/>
<circle cx="341.3" cy="585" r="1.8" fill="#103c10"/>
<line x1="196.25" y1="296.9" x2="196.25" y2="303" stroke="#a02222" stroke-width="1"/>
<line x1="196.25" y1="324" x2="196.25" y2="330.6" stroke="#a02222" stroke-width="1"/>
<rect x="193.25" y="303" width="6.0" height="21" fill="#008a00" stroke="#8c1a1a" stroke-width="1"/>
<text x="202.5" y="317.6" font-size="5.2" fill="#1a1a1a" font-style="italic">4k7</text>
<path class="w" d="M380,263.5 L380,270.5" fill="none" stroke="#1e5a1d" stroke-width="1"/>
<line x1="380" y1="270.5" x2="380" y2="277" stroke="#a02222" stroke-width="1"/>
<line x1="380" y1="297.5" x2="380" y2="304.4" stroke="#a02222" stroke-width="1"/>
<rect x="377" y="277" width="6" height="20.5" fill="#008a00" stroke="#8c1a1a" stroke-width="1"/>
<text x="387.5" y="291.6" font-size="5.2" fill="#1a1a1a" font-style="italic">4k7</text>
<path class="w" d="M407.2,263.5 L407.2,270.5" fill="none" stroke="#1e5a1d" stroke-width="1"/>
<line x1="407.2" y1="270.5" x2="407.2" y2="277" stroke="#a02222" stroke-width="1"/>
<line x1="407.2" y1="297.5" x2="407.2" y2="304.4" stroke="#a02222" stroke-width="1"/>
<rect x="404.2" y="277" width="6.0" height="20.5" fill="#008a00" stroke="#8c1a1a" stroke-width="1"/>
<text x="414.7" y="291.6" font-size="5.2" fill="#1a1a1a" font-style="italic">4k7</text>
<path class="w" d="M433.3,263.5 L433.3,270.5" fill="none" stroke="#1e5a1d" stroke-width="1"/>
<line x1="433.3" y1="270.5" x2="433.3" y2="277" stroke="#a02222" stroke-width="1"/>
<line x1="433.3" y1="297.5" x2="433.3" y2="304.4" stroke="#a02222" stroke-width="1"/>
<rect x="430.3" y="277" width="6.0" height="20.5" fill="#008a00" stroke="#8c1a1a" stroke-width="1"/>
<text x="440.8" y="291.6" font-size="5.2" fill="#1a1a1a" font-style="italic">4k7</text>
<line x1="196.25" y1="394.6" x2="196.25" y2="400.7" stroke="#a02222" stroke-width="1"/>
<line x1="196.25" y1="421.6" x2="196.25" y2="427.3" stroke="#a02222" stroke-width="1"/>
<circle cx="196.25" cy="402.9" r="2.2" fill="#00a000" stroke="#8c1a1a" stroke-width="1"/>
<circle cx="196.25" cy="419.4" r="2.2" fill="#00a000" stroke="#8c1a1a" stroke-width="1"/>
<line x1="190.6" y1="401.9" x2="190.6" y2="420.9" stroke="#8c1a1a" stroke-width="1"/>
<rect x="187.6" y="405.5" width="3.0" height="11.25" fill="#008a00" stroke="#8c1a1a" stroke-width="1"/>
<circle cx="189.9" cy="397.4" r="2.2" fill="#ff1010"/>
<line x1="248" y1="297.5" x2="255.6" y2="297.5" stroke="#a02222" stroke-width="1"/>
<line x1="268.4" y1="297.5" x2="275.9" y2="297.5" stroke="#a02222" stroke-width="1"/>
<line x1="255.6" y1="286.9" x2="255.6" y2="307.5" stroke="#a02222" stroke-width="1"/>
<line x1="268.4" y1="286.9" x2="268.4" y2="307.5" stroke="#a02222" stroke-width="1"/>
<rect x="258.3" y="289.75" width="7.199999999999989" height="14.0" fill="#008a00" stroke="#8c1a1a" stroke-width="1"/>
<text x="254.75" y="285.2" font-size="7.2" fill="#151515" stroke="#151515" stroke-width="0.25" font-weight="normal" text-anchor="start" >4MHZ</text>
<rect x="308.0" y="338.0" width="72.30000000000001" height="98.89999999999998" fill="#008a00" stroke="#8c1a1a" stroke-width="1"/>
<line x1="294.1" y1="344.1" x2="308" y2="344.1" stroke="#a02222" stroke-width="1"/>
<line x1="294.1" y1="350.8" x2="308" y2="350.8" stroke="#a02222" stroke-width="1"/>
<line x1="294.1" y1="364.1" x2="308" y2="364.1" stroke="#a02222" stroke-width="1"/>
<line x1="380.3" y1="344.1" x2="394" y2="344.1" stroke="#a02222" stroke-width="1"/>
<line x1="380.3" y1="350.6" x2="394" y2="350.6" stroke="#a02222" stroke-width="1"/>
<line x1="380.3" y1="357.25" x2="394" y2="357.25" stroke="#a02222" stroke-width="1"/>
<line x1="380.3" y1="364.4" x2="394" y2="364.4" stroke="#a02222" stroke-width="1"/>
<line x1="380.3" y1="370.9" x2="394" y2="370.9" stroke="#a02222" stroke-width="1"/>
<line x1="380.3" y1="384.4" x2="394" y2="384.4" stroke="#a02222" stroke-width="1"/>
<line x1="380.3" y1="391.0" x2="394" y2="391.0" stroke="#a02222" stroke-width="1"/>
<line x1="380.3" y1="397.5" x2="394" y2="397.5" stroke="#a02222" stroke-width="1"/>
<line x1="380.3" y1="405.0" x2="394" y2="405.0" stroke="#a02222" stroke-width="1"/>
<line x1="380.3" y1="411.5" x2="394" y2="411.5" stroke="#a02222" stroke-width="1"/>
<line x1="380.3" y1="417.75" x2="394" y2="417.75" stroke="#a02222" stroke-width="1"/>
<line x1="380.3" y1="424.4" x2="394" y2="424.4" stroke="#a02222" stroke-width="1"/>
<line x1="380.3" y1="430.6" x2="394" y2="430.6" stroke="#a02222" stroke-width="1"/>
<text x="307.8" y="335.7" font-size="7" fill="#151515" stroke="#151515" stroke-width="0.25" font-weight="normal" text-anchor="start" >U1</text>
<text x="307.8" y="443.2" font-size="5.2" fill="#222" stroke="#222" stroke-width="0.25" font-weight="normal" text-anchor="start" >PIC16F84A</text>
<text x="311.8" y="346.8" font-size="5.3" fill="#031003" stroke="#031003" stroke-width="0.25" font-weight="normal" text-anchor="start" >OSC1/CLKIN</text>
<text x="311.8" y="353.2" font-size="5.3" fill="#031003" stroke="#031003" stroke-width="0.25" font-weight="normal" text-anchor="start" >OSC2/CLKOUT</text>
<text x="311.8" y="366.7" font-size="5.3" fill="#031003" stroke="#031003" stroke-width="0.25" font-weight="normal" text-anchor="start" >MCLR</text>
<line x1="311.8" y1="361.3" x2="326.4" y2="361.3" stroke="#031003" stroke-width="0.6"/>
<text x="377.2" y="346.70000000000005" font-size="5.3" fill="#031003" stroke="#031003" stroke-width="0.25" font-weight="normal" text-anchor="end" >RA0</text>
<text x="377.2" y="353.20000000000005" font-size="5.3" fill="#031003" stroke="#031003" stroke-width="0.25" font-weight="normal" text-anchor="end" >RA1</text>
<text x="377.2" y="359.85" font-size="5.3" fill="#031003" stroke="#031003" stroke-width="0.25" font-weight="normal" text-anchor="end" >RA2</text>
<text x="377.2" y="367.0" font-size="5.3" fill="#031003" stroke="#031003" stroke-width="0.25" font-weight="normal" text-anchor="end" >RA3</text>
<text x="377.2" y="373.5" font-size="5.3" fill="#031003" stroke="#031003" stroke-width="0.25" font-weight="normal" text-anchor="end" >RA4/T0CKI</text>
<text x="377.2" y="387.0" font-size="5.3" fill="#031003" stroke="#031003" stroke-width="0.25" font-weight="normal" text-anchor="end" >RB0/INT</text>
<text x="377.2" y="393.6" font-size="5.3" fill="#031003" stroke="#031003" stroke-width="0.25" font-weight="normal" text-anchor="end" >RB1</text>
<text x="377.2" y="400.1" font-size="5.3" fill="#031003" stroke="#031003" stroke-width="0.25" font-weight="normal" text-anchor="end" >RB2</text>
<text x="377.2" y="407.6" font-size="5.3" fill="#031003" stroke="#031003" stroke-width="0.25" font-weight="normal" text-anchor="end" >RB3</text>
<text x="377.2" y="414.1" font-size="5.3" fill="#031003" stroke="#031003" stroke-width="0.25" font-weight="normal" text-anchor="end" >RB4</text>
<text x="377.2" y="420.35" font-size="5.3" fill="#031003" stroke="#031003" stroke-width="0.25" font-weight="normal" text-anchor="end" >RB5</text>
<text x="377.2" y="427.0" font-size="5.3" fill="#031003" stroke="#031003" stroke-width="0.25" font-weight="normal" text-anchor="end" >RB6</text>
<text x="377.2" y="433.20000000000005" font-size="5.3" fill="#031003" stroke="#031003" stroke-width="0.25" font-weight="normal" text-anchor="end" >RB7</text>
<text x="390.6" y="342.6" font-size="5.0" fill="#262626" stroke="#262626" stroke-width="0.25" font-weight="normal" text-anchor="middle" >17</text>
<text x="390.6" y="349.1" font-size="5.0" fill="#262626" stroke="#262626" stroke-width="0.25" font-weight="normal" text-anchor="middle" >18</text>
<text x="390.6" y="355.75" font-size="5.0" fill="#262626" stroke="#262626" stroke-width="0.25" font-weight="normal" text-anchor="middle" >1</text>
<text x="390.6" y="362.9" font-size="5.0" fill="#262626" stroke="#262626" stroke-width="0.25" font-weight="normal" text-anchor="middle" >2</text>
<text x="390.6" y="369.4" font-size="5.0" fill="#262626" stroke="#262626" stroke-width="0.25" font-weight="normal" text-anchor="middle" >3</text>
<text x="390.6" y="382.9" font-size="5.0" fill="#262626" stroke="#262626" stroke-width="0.25" font-weight="normal" text-anchor="middle" >6</text>
<text x="390.6" y="389.5" font-size="5.0" fill="#262626" stroke="#262626" stroke-width="0.25" font-weight="normal" text-anchor="middle" >7</text>
<text x="390.6" y="396.0" font-size="5.0" fill="#262626" stroke="#262626" stroke-width="0.25" font-weight="normal" text-anchor="middle" >8</text>
<text x="390.6" y="403.5" font-size="5.0" fill="#262626" stroke="#262626" stroke-width="0.25" font-weight="normal" text-anchor="middle" >9</text>
<text x="390.6" y="410.0" font-size="5.0" fill="#262626" stroke="#262626" stroke-width="0.25" font-weight="normal" text-anchor="middle" >10</text>
<text x="390.6" y="416.25" font-size="5.0" fill="#262626" stroke="#262626" stroke-width="0.25" font-weight="normal" text-anchor="middle" >11</text>
<text x="390.6" y="422.9" font-size="5.0" fill="#262626" stroke="#262626" stroke-width="0.25" font-weight="normal" text-anchor="middle" >12</text>
<text x="390.6" y="429.1" font-size="5.0" fill="#262626" stroke="#262626" stroke-width="0.25" font-weight="normal" text-anchor="middle" >13</text>
<text x="299.2" y="342.6" font-size="5.0" fill="#262626" stroke="#262626" stroke-width="0.25" font-weight="normal" text-anchor="middle" >16</text>
<text x="299.2" y="349.2" font-size="5.0" fill="#262626" stroke="#262626" stroke-width="0.25" font-weight="normal" text-anchor="middle" >15</text>
<text x="300.1" y="362.6" font-size="5.0" fill="#262626" stroke="#262626" stroke-width="0.25" font-weight="normal" text-anchor="middle" >4</text>
<path d="M403.6,243.3 L410.6,243.3 L407.1,236.6 Z" fill="none" stroke="#103c10" stroke-width="1.5"/>
<line x1="435.6" y1="310" x2="442.8" y2="310" stroke="#a02222" stroke-width="1"/>
<line x1="461.8" y1="310" x2="468.75" y2="310" stroke="#a02222" stroke-width="1"/>
<circle cx="445" cy="310" r="2.2" fill="#00a000" stroke="#8c1a1a" stroke-width="1"/>
<circle cx="459.6" cy="310" r="2.2" fill="#00a000" stroke="#8c1a1a" stroke-width="1"/>
<line x1="443" y1="305.4" x2="461.25" y2="305.4" stroke="#8c1a1a" stroke-width="1"/>
<rect x="447.5" y="301.9" width="11.0" height="3.5" fill="#008a00" stroke="#8c1a1a" stroke-width="1"/>
<circle cx="465" cy="303.7" r="2.2" fill="#ff1010"/>
<line x1="435.6" y1="323.75" x2="442.8" y2="323.75" stroke="#a02222" stroke-width="1"/>
<line x1="461.8" y1="323.75" x2="468.75" y2="323.75" stroke="#a02222" stroke-width="1"/>
<circle cx="445" cy="323.75" r="2.2" fill="#00a000" stroke="#8c1a1a" stroke-width="1"/>
<circle cx="459.6" cy="323.75" r="2.2" fill="#00a000" stroke="#8c1a1a" stroke-width="1"/>
<line x1="443" y1="319.15" x2="461.25" y2="319.15" stroke="#8c1a1a" stroke-width="1"/>
<rect x="447.5" y="315.65" width="11.0" height="3.5" fill="#008a00" stroke="#8c1a1a" stroke-width="1"/>
<circle cx="465" cy="317.45" r="2.2" fill="#ff1010"/>
<line x1="435.6" y1="337.75" x2="442.8" y2="337.75" stroke="#a02222" stroke-width="1"/>
<line x1="461.8" y1="337.75" x2="468.75" y2="337.75" stroke="#a02222" stroke-width="1"/>
<circle cx="445" cy="337.75" r="2.2" fill="#00a000" stroke="#8c1a1a" stroke-width="1"/>
<circle cx="459.6" cy="337.75" r="2.2" fill="#00a000" stroke="#8c1a1a" stroke-width="1"/>
<line x1="443" y1="333.15" x2="461.25" y2="333.15" stroke="#8c1a1a" stroke-width="1"/>
<rect x="447.5" y="329.65" width="11.0" height="3.5" fill="#008a00" stroke="#8c1a1a" stroke-width="1"/>
<circle cx="465" cy="331.45" r="2.2" fill="#ff1010"/>
<rect x="476.5" y="302" width="24.5" height="14" fill="#b5ad86" opacity="0.9"/>
<text x="479.6" y="313.8" font-size="10.5" fill="#8a1717" stroke="#8a1717" stroke-width="0.4" font-weight="bold" text-anchor="start" transform="translate(479.6,0) scale(0.87,1) translate(-479.6,0)">SAĞ</text>
<text x="479.8" y="327.5" font-size="10.5" fill="#8a1717" stroke="#8a1717" stroke-width="0.4" font-weight="bold" text-anchor="start" transform="translate(479.8,0) scale(0.87,1) translate(-479.8,0)">SOL</text>
<text x="479.0" y="340.0" font-size="10.5" fill="#8a1717" stroke="#8a1717" stroke-width="0.4" font-weight="bold" text-anchor="start" transform="translate(479,0) scale(0.9,1) translate(-479,0)">DUR</text>
<line x1="464.4" y1="357.5" x2="479" y2="357.5" stroke="#103c10" stroke-width="1"/>
<line x1="467.75" y1="361.5" x2="475.6" y2="361.5" stroke="#103c10" stroke-width="1"/>
<line x1="471" y1="364.5" x2="473.5" y2="364.5" stroke="#103c10" stroke-width="1"/>
<line x1="564" y1="625.5" x2="577" y2="625.5" stroke="#103c10" stroke-width="1"/>
<line x1="566.5" y1="628.5" x2="574.5" y2="628.5" stroke="#103c10" stroke-width="1"/>
<line x1="569" y1="631.5" x2="572" y2="631.5" stroke="#103c10" stroke-width="1"/>
<line x1="465" y1="384.4" x2="471.9" y2="384.4" stroke="#a02222" stroke-width="1"/>
<line x1="491.25" y1="384.4" x2="498.5" y2="384.4" stroke="#a02222" stroke-width="1"/>
<rect x="471.9" y="381.5" width="19.350000000000023" height="5.7999999999999545" fill="#008a00" stroke="#8c1a1a" stroke-width="1"/>
<text x="471.2" y="379.79999999999995" font-size="7.4" fill="#151515" stroke="#151515" stroke-width="0.25" font-weight="normal" text-anchor="start" >R1</text>
<text x="471.8" y="393.4" font-size="5.0" fill="#333" stroke="#333" stroke-width="0.25" font-weight="normal" text-anchor="start" >1k</text>
<line x1="465" y1="443.5" x2="471.9" y2="443.5" stroke="#a02222" stroke-width="1"/>
<line x1="491.25" y1="443.5" x2="498.5" y2="443.5" stroke="#a02222" stroke-width="1"/>
<rect x="471.9" y="440.6" width="19.350000000000023" height="5.7999999999999545" fill="#008a00" stroke="#8c1a1a" stroke-width="1"/>
<text x="471.2" y="438.9" font-size="7.4" fill="#151515" stroke="#151515" stroke-width="0.25" font-weight="normal" text-anchor="start" >R2</text>
<text x="471.8" y="452.5" font-size="5.0" fill="#333" stroke="#333" stroke-width="0.25" font-weight="normal" text-anchor="start" >1k</text>
<line x1="465" y1="503.9" x2="471.9" y2="503.9" stroke="#a02222" stroke-width="1"/>
<line x1="491.25" y1="503.9" x2="498.5" y2="503.9" stroke="#a02222" stroke-width="1"/>
<rect x="471.9" y="501.0" width="19.350000000000023" height="5.7999999999999545" fill="#008a00" stroke="#8c1a1a" stroke-width="1"/>
<text x="471.2" y="499.29999999999995" font-size="7.4" fill="#151515" stroke="#151515" stroke-width="0.25" font-weight="normal" text-anchor="start" >R3</text>
<text x="471.8" y="512.9" font-size="5.0" fill="#333" stroke="#333" stroke-width="0.25" font-weight="normal" text-anchor="start" >1k</text>
<line x1="465" y1="564.7" x2="471.9" y2="564.7" stroke="#a02222" stroke-width="1"/>
<line x1="491.25" y1="564.7" x2="498.5" y2="564.7" stroke="#a02222" stroke-width="1"/>
<rect x="471.9" y="561.8000000000001" width="19.350000000000023" height="5.7999999999999545" fill="#008a00" stroke="#8c1a1a" stroke-width="1"/>
<text x="471.2" y="560.1" font-size="7.4" fill="#151515" stroke="#151515" stroke-width="0.25" font-weight="normal" text-anchor="start" >R4</text>
<text x="471.8" y="573.7" font-size="5.0" fill="#333" stroke="#333" stroke-width="0.25" font-weight="normal" text-anchor="start" >1k</text>
<line x1="504.4" y1="384.4" x2="518.1" y2="384.4" stroke="#a02222" stroke-width="1"/>
<line x1="518.1" y1="370.2" x2="518.1" y2="384.9" stroke="#a02222" stroke-width="1"/>
<rect x="520.5" y="367.0" width="4.399999999999977" height="20.299999999999955" fill="#008a00" stroke="#8c1a1a" stroke-width="1"/>
<line x1="525" y1="370.4" x2="538" y2="370.4" stroke="#a02222" stroke-width="1"/>
<line x1="538" y1="356.7" x2="538" y2="370.4" stroke="#a02222" stroke-width="1"/>
<line x1="525" y1="384.4" x2="538" y2="384.4" stroke="#a02222" stroke-width="1"/>
<line x1="530" y1="377.09999999999997" x2="538" y2="377.09999999999997" stroke="#a02222" stroke-width="1"/>
<line x1="538" y1="377.09999999999997" x2="538" y2="397.9" stroke="#a02222" stroke-width="1"/>
<path d="M525.9,377.09999999999997 L530.3,374.5 L530.3,379.7 Z" fill="#00a000" stroke="#8c1a1a" stroke-width="0.9"/>
<text x="541.9" y="370.2" font-size="7.0" fill="#151515" stroke="#151515" stroke-width="0.25" font-weight="normal" text-anchor="start" >Q1</text>
<text x="542" y="379.0" font-size="5.2" fill="#262626" stroke="#262626" stroke-width="0.25" font-weight="normal" text-anchor="start" >IRF510</text>
<line x1="504.4" y1="443.5" x2="518.1" y2="443.5" stroke="#a02222" stroke-width="1"/>
<line x1="518.1" y1="429.3" x2="518.1" y2="444.0" stroke="#a02222" stroke-width="1"/>
<rect x="520.5" y="426.1" width="4.399999999999977" height="20.299999999999955" fill="#008a00" stroke="#8c1a1a" stroke-width="1"/>
<line x1="525" y1="429.5" x2="538" y2="429.5" stroke="#a02222" stroke-width="1"/>
<line x1="538" y1="415.8" x2="538" y2="429.5" stroke="#a02222" stroke-width="1"/>
<line x1="525" y1="443.5" x2="538" y2="443.5" stroke="#a02222" stroke-width="1"/>
<line x1="530" y1="436.2" x2="538" y2="436.2" stroke="#a02222" stroke-width="1"/>
<line x1="538" y1="436.2" x2="538" y2="457.0" stroke="#a02222" stroke-width="1"/>
<path d="M525.9,436.2 L530.3,433.6 L530.3,438.8 Z" fill="#00a000" stroke="#8c1a1a" stroke-width="0.9"/>
<text x="541.9" y="429.3" font-size="7.0" fill="#151515" stroke="#151515" stroke-width="0.25" font-weight="normal" text-anchor="start" >Q2</text>
<text x="542" y="438.1" font-size="5.2" fill="#262626" stroke="#262626" stroke-width="0.25" font-weight="normal" text-anchor="start" >IRF510</text>
<line x1="504.4" y1="503.9" x2="518.1" y2="503.9" stroke="#a02222" stroke-width="1"/>
<line x1="518.1" y1="489.7" x2="518.1" y2="504.4" stroke="#a02222" stroke-width="1"/>
<rect x="520.5" y="486.5" width="4.399999999999977" height="20.299999999999955" fill="#008a00" stroke="#8c1a1a" stroke-width="1"/>
<line x1="525" y1="489.9" x2="538" y2="489.9" stroke="#a02222" stroke-width="1"/>
<line x1="538" y1="476.2" x2="538" y2="489.9" stroke="#a02222" stroke-width="1"/>
<line x1="525" y1="503.9" x2="538" y2="503.9" stroke="#a02222" stroke-width="1"/>
<line x1="530" y1="496.59999999999997" x2="538" y2="496.59999999999997" stroke="#a02222" stroke-width="1"/>
<line x1="538" y1="496.59999999999997" x2="538" y2="517.4" stroke="#a02222" stroke-width="1"/>
<path d="M525.9,496.59999999999997 L530.3,494.0 L530.3,499.2 Z" fill="#00a000" stroke="#8c1a1a" stroke-width="0.9"/>
<text x="541.9" y="489.7" font-size="7.0" fill="#151515" stroke="#151515" stroke-width="0.25" font-weight="normal" text-anchor="start" >Q3</text>
<text x="542" y="498.5" font-size="5.2" fill="#262626" stroke="#262626" stroke-width="0.25" font-weight="normal" text-anchor="start" >IRF510</text>
<line x1="504.4" y1="564.7" x2="518.1" y2="564.7" stroke="#a02222" stroke-width="1"/>
<line x1="518.1" y1="550.5" x2="518.1" y2="565.2" stroke="#a02222" stroke-width="1"/>
<rect x="520.5" y="547.3000000000001" width="4.399999999999977" height="20.299999999999955" fill="#008a00" stroke="#8c1a1a" stroke-width="1"/>
<line x1="525" y1="550.7" x2="538" y2="550.7" stroke="#a02222" stroke-width="1"/>
<line x1="538" y1="537.0" x2="538" y2="550.7" stroke="#a02222" stroke-width="1"/>
<line x1="525" y1="564.7" x2="538" y2="564.7" stroke="#a02222" stroke-width="1"/>
<line x1="530" y1="557.4000000000001" x2="538" y2="557.4000000000001" stroke="#a02222" stroke-width="1"/>
<line x1="538" y1="557.4000000000001" x2="538" y2="578.2" stroke="#a02222" stroke-width="1"/>
<path d="M525.9,557.4000000000001 L530.3,554.8000000000001 L530.3,560.0 Z" fill="#00a000" stroke="#8c1a1a" stroke-width="0.9"/>
<text x="541.9" y="550.5" font-size="7.0" fill="#151515" stroke="#151515" stroke-width="0.25" font-weight="normal" text-anchor="start" >Q4</text>
<text x="542" y="559.3000000000001" font-size="5.2" fill="#262626" stroke="#262626" stroke-width="0.25" font-weight="normal" text-anchor="start" >IRF510</text>
<line x1="583.75" y1="350.7" x2="590.4" y2="350.7" stroke="#a02222" stroke-width="1"/>
<line x1="596.25" y1="350.7" x2="604" y2="350.7" stroke="#a02222" stroke-width="1"/>
<path d="M590.4,344.7 L590.4,356.7 L596.25,350.7 Z" fill="#00a000" stroke="#8c1a1a" stroke-width="1"/>
<line x1="596.25" y1="344.5" x2="596.25" y2="356.9" stroke="#8c1a1a" stroke-width="1"/>
<text x="589.7" y="342.09999999999997" font-size="6.6" fill="#151515" stroke="#151515" stroke-width="0.25" font-weight="normal" text-anchor="start" >D1</text>
<text x="590" y="362.9" font-size="4.9" fill="#262626" stroke="#262626" stroke-width="0.25" font-weight="normal" text-anchor="start" >1N4007</text>
<line x1="583.75" y1="411.3" x2="590.4" y2="411.3" stroke="#a02222" stroke-width="1"/>
<line x1="596.25" y1="411.3" x2="604" y2="411.3" stroke="#a02222" stroke-width="1"/>
<path d="M590.4,405.3 L590.4,417.3 L596.25,411.3 Z" fill="#00a000" stroke="#8c1a1a" stroke-width="1"/>
<line x1="596.25" y1="405.1" x2="596.25" y2="417.5" stroke="#8c1a1a" stroke-width="1"/>
<text x="589.7" y="402.7" font-size="6.6" fill="#151515" stroke="#151515" stroke-width="0.25" font-weight="normal" text-anchor="start" >D2</text>
<text x="590" y="423.5" font-size="4.9" fill="#262626" stroke="#262626" stroke-width="0.25" font-weight="normal" text-anchor="start" >1N4007</text>
<line x1="583.75" y1="471.1" x2="590.4" y2="471.1" stroke="#a02222" stroke-width="1"/>
<line x1="596.25" y1="471.1" x2="604" y2="471.1" stroke="#a02222" stroke-width="1"/>
<path d="M590.4,465.1 L590.4,477.1 L596.25,471.1 Z" fill="#00a000" stroke="#8c1a1a" stroke-width="1"/>
<line x1="596.25" y1="464.90000000000003" x2="596.25" y2="477.3" stroke="#8c1a1a" stroke-width="1"/>
<text x="589.7" y="462.5" font-size="6.6" fill="#151515" stroke="#151515" stroke-width="0.25" font-weight="normal" text-anchor="start" >D3</text>
<text x="590" y="483.3" font-size="4.9" fill="#262626" stroke="#262626" stroke-width="0.25" font-weight="normal" text-anchor="start" >1N4007</text>
<line x1="583.75" y1="530.8" x2="590.4" y2="530.8" stroke="#a02222" stroke-width="1"/>
<line x1="596.25" y1="530.8" x2="604" y2="530.8" stroke="#a02222" stroke-width="1"/>
<path d="M590.4,524.8 L590.4,536.8 L596.25,530.8 Z" fill="#00a000" stroke="#8c1a1a" stroke-width="1"/>
<line x1="596.25" y1="524.5999999999999" x2="596.25" y2="537.0" stroke="#8c1a1a" stroke-width="1"/>
<text x="589.7" y="522.1999999999999" font-size="6.6" fill="#151515" stroke="#151515" stroke-width="0.25" font-weight="normal" text-anchor="start" >D4</text>
<text x="590" y="543.0" font-size="4.9" fill="#262626" stroke="#262626" stroke-width="0.25" font-weight="normal" text-anchor="start" >1N4007</text>
<line x1="675.8" y1="430.5" x2="684" y2="430.5" stroke="#a02222" stroke-width="1"/>
<line x1="707.5" y1="430.5" x2="715.7" y2="430.5" stroke="#a02222" stroke-width="1"/>
<line x1="675.8" y1="436.9" x2="684" y2="436.9" stroke="#a02222" stroke-width="1"/>
<line x1="707.5" y1="436.9" x2="715.7" y2="436.9" stroke="#a02222" stroke-width="1"/>
<line x1="675.8" y1="443.3" x2="684" y2="443.3" stroke="#a02222" stroke-width="1"/>
<line x1="707.5" y1="443.3" x2="715.7" y2="443.3" stroke="#a02222" stroke-width="1"/>
<circle cx="695.8" cy="436.9" r="12.6" fill="#cecece" stroke="#8c1a1a" stroke-width="1.2"/>
<circle cx="695.8" cy="436.9" r="3" fill="#c8c8b0" stroke="#8c1a1a" stroke-width="1"/>
<path d="M689.01,430.11 A9.6,9.6 0 0 1 702.59,430.11 L700.18,432.52 A6.2,6.2 0 0 0 691.42,432.52 Z" fill="none" stroke="#8c1a1a" stroke-width="1.1"/>
<path d="M702.59,443.69 A9.6,9.6 0 0 1 689.01,443.69 L691.42,441.28 A6.2,6.2 0 0 0 700.18,441.28 Z" fill="none" stroke="#8c1a1a" stroke-width="1.1"/>
<rect x="686.4" y="451.3" width="18.899999999999977" height="7.199999999999989" fill="#0b3a0b" stroke="#12e012" stroke-width="1.1"/>
<line x1="241.9" y1="510.25" x2="241.9" y2="517.75" stroke="#a02222" stroke-width="1"/>
<line x1="241.9" y1="538.5" x2="241.9" y2="544.75" stroke="#a02222" stroke-width="1"/>
<rect x="238.9" y="517.75" width="6.0" height="20.75" fill="#008a00" stroke="#8c1a1a" stroke-width="1"/>
<line x1="241.9" y1="551" x2="241.9" y2="557" stroke="#a02222" stroke-width="1"/>
<line x1="241.9" y1="572.3" x2="241.9" y2="578" stroke="#a02222" stroke-width="1"/>
<circle cx="241.9" cy="564.7" r="7.6" fill="#050000" stroke="#8c1a1a" stroke-width="1"/>
<path d="M238.3,562.4 L245.5,562.4 L241.9,567.1 Z" fill="#5a0808" stroke="#b01818" stroke-width="1"/><path d="M237.9,567.3 L245.9,567.3 M241.9,557.5 L241.9,572" fill="none" stroke="#b01818" stroke-width="1"/>
<text x="248.70000000000002" y="524.1" font-size="7.4" fill="#151515" stroke="#151515" stroke-width="0.25" font-weight="normal" text-anchor="start" >R5</text>
<text x="248.70000000000002" y="532.4" font-size="5.0" fill="#2a2a2a" stroke="#2a2a2a" stroke-width="0.25" font-weight="normal" text-anchor="start" >150</text>
<line x1="261.9" y1="510.25" x2="261.9" y2="517.75" stroke="#a02222" stroke-width="1"/>
<line x1="261.9" y1="538.5" x2="261.9" y2="544.75" stroke="#a02222" stroke-width="1"/>
<rect x="258.9" y="517.75" width="6.0" height="20.75" fill="#008a00" stroke="#8c1a1a" stroke-width="1"/>
<line x1="261.9" y1="551" x2="261.9" y2="557" stroke="#a02222" stroke-width="1"/>
<line x1="261.9" y1="572.3" x2="261.9" y2="578" stroke="#a02222" stroke-width="1"/>
<circle cx="261.9" cy="564.7" r="7.6" fill="#050000" stroke="#8c1a1a" stroke-width="1"/>
<path d="M258.29999999999995,562.4 L265.5,562.4 L261.9,567.1 Z" fill="#5a0808" stroke="#b01818" stroke-width="1"/><path d="M257.9,567.3 L265.9,567.3 M261.9,557.5 L261.9,572" fill="none" stroke="#b01818" stroke-width="1"/>
<text x="268.7" y="524.1" font-size="7.4" fill="#151515" stroke="#151515" stroke-width="0.25" font-weight="normal" text-anchor="start" >R6</text>
<text x="268.7" y="532.4" font-size="5.0" fill="#2a2a2a" stroke="#2a2a2a" stroke-width="0.25" font-weight="normal" text-anchor="start" >150</text>
<line x1="321.2" y1="510.25" x2="321.2" y2="517.75" stroke="#a02222" stroke-width="1"/>
<line x1="321.2" y1="538.5" x2="321.2" y2="544.75" stroke="#a02222" stroke-width="1"/>
<rect x="318.2" y="517.75" width="6.0" height="20.75" fill="#008a00" stroke="#8c1a1a" stroke-width="1"/>
<line x1="321.2" y1="551" x2="321.2" y2="557" stroke="#a02222" stroke-width="1"/>
<line x1="321.2" y1="572.3" x2="321.2" y2="578" stroke="#a02222" stroke-width="1"/>
<circle cx="321.2" cy="564.7" r="7.6" fill="#050000" stroke="#8c1a1a" stroke-width="1"/>
<path d="M317.59999999999997,562.4 L324.8,562.4 L321.2,567.1 Z" fill="#5a0808" stroke="#b01818" stroke-width="1"/><path d="M317.2,567.3 L325.2,567.3 M321.2,557.5 L321.2,572" fill="none" stroke="#b01818" stroke-width="1"/>
<text x="328.0" y="524.1" font-size="7.4" fill="#151515" stroke="#151515" stroke-width="0.25" font-weight="normal" text-anchor="start" >R7</text>
<text x="328.0" y="532.4" font-size="5.0" fill="#2a2a2a" stroke="#2a2a2a" stroke-width="0.25" font-weight="normal" text-anchor="start" >150</text>
<line x1="341.3" y1="510.25" x2="341.3" y2="517.75" stroke="#a02222" stroke-width="1"/>
<line x1="341.3" y1="538.5" x2="341.3" y2="544.75" stroke="#a02222" stroke-width="1"/>
<rect x="338.3" y="517.75" width="6.0" height="20.75" fill="#008a00" stroke="#8c1a1a" stroke-width="1"/>
<line x1="341.3" y1="551" x2="341.3" y2="557" stroke="#a02222" stroke-width="1"/>
<line x1="341.3" y1="572.3" x2="341.3" y2="578" stroke="#a02222" stroke-width="1"/>
<circle cx="341.3" cy="564.7" r="7.6" fill="#050000" stroke="#8c1a1a" stroke-width="1"/>
<path d="M337.7,562.4 L344.90000000000003,562.4 L341.3,567.1 Z" fill="#5a0808" stroke="#b01818" stroke-width="1"/><path d="M337.3,567.3 L345.3,567.3 M341.3,557.5 L341.3,572" fill="none" stroke="#b01818" stroke-width="1"/>
<text x="348.1" y="524.1" font-size="7.4" fill="#151515" stroke="#151515" stroke-width="0.25" font-weight="normal" text-anchor="start" >R8</text>
<text x="348.1" y="532.4" font-size="5.0" fill="#2a2a2a" stroke="#2a2a2a" stroke-width="0.25" font-weight="normal" text-anchor="start" >150</text>
<text x="242.5" y="440.8" font-size="10.5" fill="#8a1717" stroke="#8a1717" stroke-width="0.4" font-weight="bold" text-anchor="start" transform="translate(242.5,0) scale(0.905,1) translate(-242.5,0)">RESET</text>
<text x="243.3" y="601.2" font-size="10.5" fill="#8a1717" stroke="#8a1717" stroke-width="0.4" font-weight="bold" text-anchor="start" transform="translate(243.3,0) scale(0.87,1) translate(-243.3,0)">SOL</text>
<text x="322.7" y="601.2" font-size="10.5" fill="#8a1717" stroke="#8a1717" stroke-width="0.4" font-weight="bold" text-anchor="start" transform="translate(322.7,0) scale(0.87,1) translate(-322.7,0)">SAĞ</text>
<path d="M455.3,424.3 L457.5,422 L459.5,422 L462.8,424.3 L459.5,426.7 L457.5,426.7 Z" fill="#2828e0" stroke="none"/>
</g>
</svg>
</body></html>
